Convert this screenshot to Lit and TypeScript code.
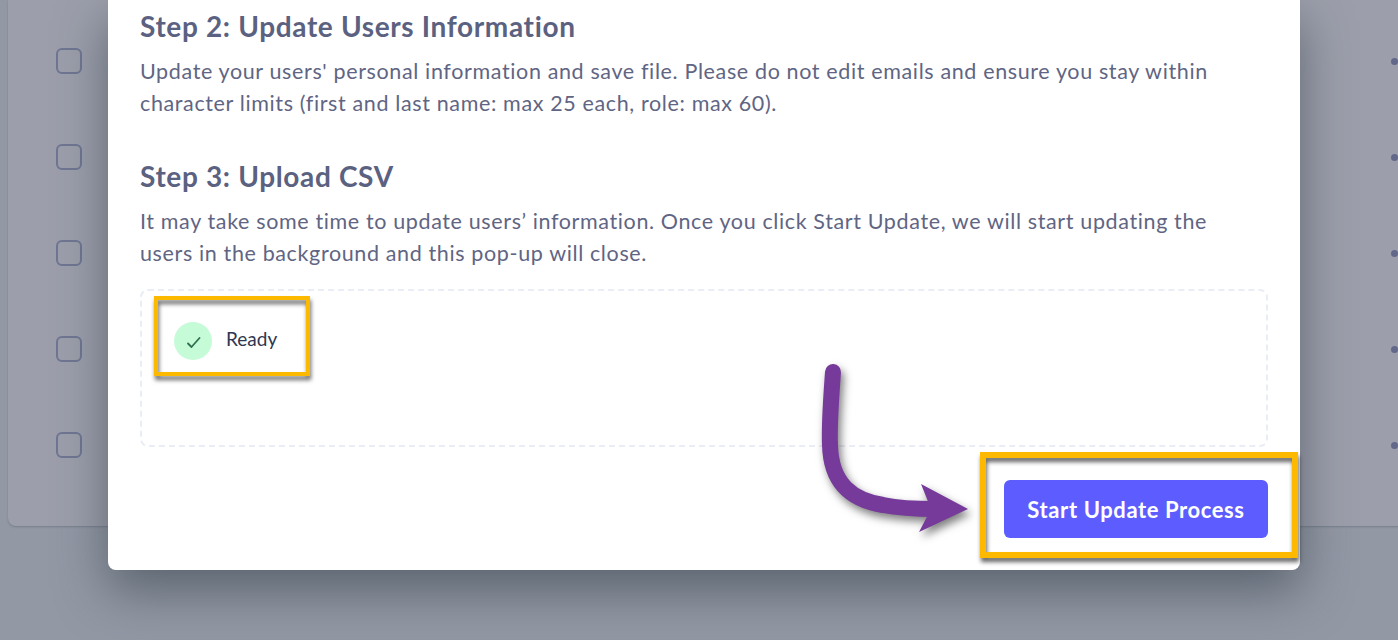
import { LitElement, html, css } from "lit";
import { customElement } from "lit/decorators.js";

@customElement("app-root")
export class AppRoot extends LitElement {
  static styles = css`
    :host {
      display: block;
      position: relative;
      width: 1398px;
      height: 640px;
      overflow: hidden;
      background: #9298a4;
      font-family: "Lato", "Liberation Sans", sans-serif;
    }
    .card {
      box-sizing: border-box;
      width: 1396px;
      height: 526px;
      margin-left: 8px;
      padding-top: 13px;
      background: #9c9fab;
      border-radius: 0 0 8px 8px;
      box-shadow: 0 1px 2px rgba(70, 78, 95, 0.35);
    }
    .row {
      height: 96px;
      display: flex;
      align-items: center;
      justify-content: space-between;
      padding: 0 6px 0 48px;
    }
    .checkbox {
      box-sizing: border-box;
      width: 26px;
      height: 26px;
      border: 2px solid #6f7692;
      border-radius: 6px;
    }
    .dot {
      width: 7px;
      height: 7px;
      border-radius: 50%;
      background: #62688a;
    }
    .modal {
      position: absolute;
      left: 108px;
      top: 0;
      box-sizing: border-box;
      width: 1192px;
      height: 570px;
      padding: 6px 32px 32px;
      background: #fff;
      border-radius: 0 0 8px 8px;
      box-shadow: 0 20px 50px rgba(55, 66, 78, 0.62);
    }
    h3 {
      margin: 0;
      font-size: 28px;
      line-height: 40px;
      font-weight: 700;
      color: #5b6180;
      letter-spacing: 0.65px;
    }
    p {
      margin: 9px 0 0;
      font-size: 21.5px;
      line-height: 32px;
      color: #5f6583;
      letter-spacing: 0.63px;
    }
    .gap {
      margin-top: 37px;
    }
    .drop {
      position: relative;
      box-sizing: border-box;
      height: 158px;
      margin-top: 20px;
      padding: 31px 32px;
      border: 2px dashed #e9edf5;
      border-radius: 8px;
      display: flex;
      align-items: flex-start;
      gap: 14px;
    }
    .status {
      width: 38px;
      height: 38px;
      border-radius: 50%;
      background: #c6fbd8;
      display: flex;
      align-items: center;
      justify-content: center;
      flex: none;
    }
    .ready {
      font-size: 19px;
      line-height: 34px;
      color: #2f3650;
    }
    .mark {
      position: absolute;
      box-sizing: border-box;
      border-style: solid;
      border-color: #fdb900;
      filter: drop-shadow(1px 4px 2px rgba(0, 0, 0, 0.6));
    }
    .mark-ready {
      left: 12px;
      top: 5px;
      width: 156px;
      height: 80px;
      border-width: 4px;
    }
    .footer {
      margin-top: 33px;
      display: flex;
      justify-content: flex-end;
    }
    .btn-wrap {
      position: relative;
    }
    .btn {
      display: block;
      width: 264px;
      height: 58px;
      padding: 0;
      border: 0;
      border-radius: 6px;
      background: #5d5dff;
      color: #fff;
      font: 700 22px "Lato", "Liberation Sans", sans-serif;
      letter-spacing: 0.6px;
    }
    .mark-btn {
      left: -24px;
      top: -28px;
      width: 318px;
      height: 106px;
      border-width: 6px;
    }
    .arrow {
      position: absolute;
      left: 700px;
      top: 340px;
      filter: drop-shadow(3px 5px 4px rgba(0, 0, 0, 0.5));
      overflow: visible;
    }
  `;

  render() {
    const rows = [0, 1, 2, 3, 4];
    return html`
      <div class="card">
        ${rows.map(
          () => html`<div class="row"><span class="checkbox"></span><span class="dot"></span></div>`
        )}
      </div>
      <div class="modal">
        <h3>Step 2: Update Users Information</h3>
        <p>
          Update your users' personal information and save file. Please do not edit emails and ensure you stay within<br />
          character limits (first and last name: max 25 each, role: max 60).
        </p>
        <h3 class="gap">Step 3: Upload CSV</h3>
        <p>
          It may take some time to update users’ information. Once you click Start Update, we will start updating the<br />
          users in the background and this pop-up will close.
        </p>
        <div class="drop">
          <span class="status">
            <svg width="18" height="14" viewBox="0 0 18 14" fill="none">
              <path d="M4 9.5 L7.5 13 L15.5 4" stroke="#2f7050" stroke-width="1.8" stroke-linecap="round" stroke-linejoin="round" />
            </svg>
          </span>
          <span class="ready">Ready</span>
          <span class="mark mark-ready"></span>
        </div>
        <div class="footer">
          <div class="btn-wrap">
            <button class="btn">Start Update Process</button>
            <span class="mark mark-btn"></span>
          </div>
        </div>
        <svg class="arrow" width="170" height="200" viewBox="0 0 170 200" fill="none">
          <path d="M25 32 C23 60 21 85 22 105 C23 145 45 160 75 165 C90 168 110 169 127 169" stroke="#763a9a" stroke-width="16" stroke-linecap="round" />
          <path d="M160 169 L113 144 L123 169 L111 192 Z" fill="#763a9a" />
        </svg>
      </div>
    `;
  }
}
